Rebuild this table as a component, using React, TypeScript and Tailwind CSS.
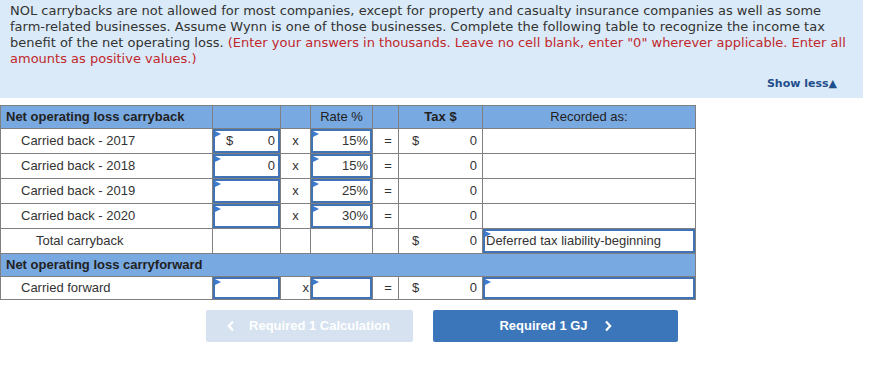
import React from "react";

const cell = "border border-[#808080] p-0 align-middle";
const verdana = { fontFamily: '"DejaVu Sans", Verdana, sans-serif' };

function Flag() {
  return (
    <span className="absolute left-0 top-0 h-0 w-0 border-y-[3px] border-l-[6px] border-y-transparent border-l-[#3b7bd0]" />
  );
}

function Field({
  children,
  h = 24,
  className = "",
}: {
  children?: React.ReactNode;
  h?: number;
  className?: string;
}) {
  return (
    <div
      className={`relative flex w-full items-center border-2 border-[#3f73b5] bg-white ${
        h === 24 ? "h-[24px]" : "h-[22px]"
      } ${className}`}
    >
      <Flag />
      {children}
    </div>
  );
}

function Money({ dollar, value }: { dollar?: boolean; value: string }) {
  return (
    <div className="flex w-full items-center justify-between pl-[11px] pr-[3px]">
      <span>{dollar ? "$" : ""}</span>
      <span>{value}</span>
    </div>
  );
}

function TaxCell({ dollar, value }: { dollar?: boolean; value: string }) {
  return (
    <td className={cell}>
      <div className="flex items-center justify-between pl-[13px] pr-[5px]">
        <span>{dollar ? "$" : ""}</span>
        <span>{value}</span>
      </div>
    </td>
  );
}

const carryback = [
  { label: "Carried back - 2017", dollar: true, amount: "0", rate: "15%", taxDollar: true },
  { label: "Carried back - 2018", dollar: false, amount: "0", rate: "15%", taxDollar: false },
  { label: "Carried back - 2019", dollar: false, amount: "", rate: "25%", taxDollar: false },
  { label: "Carried back - 2020", dollar: false, amount: "", rate: "30%", taxDollar: false },
];

export default function App() {
  return (
    <div className="w-[886px] h-[381px] bg-white text-[#333]">
      <div className="w-[863px] h-[98px] bg-[#daeaf8] pl-[10px] pt-[3px]" style={verdana}>
        <p className="text-[13px] leading-[16px] text-[#333]">
          NOL carrybacks are not allowed for most companies, except for property and casualty insurance companies as well as some
          <br />
          farm-related businesses. Assume Wynn is one of those businesses. Complete the following table to recognize the income tax
          <br />
          benefit of the net operating loss.{" "}
          <span className="text-[#c1272d]">
            (Enter your answers in thousands. Leave no cell blank, enter "0" wherever applicable. Enter all
            <br />
            amounts as positive values.)
          </span>
        </p>
        <div className="mt-[10px] flex justify-end pr-[26px]">
          <span className="text-[11px] font-bold leading-[14px] text-[#1f4f8b]">
            Show less<span className="text-[11px]">▲</span>
          </span>
        </div>
      </div>

      <table
        className="mt-[7px] w-[695px] table-fixed border-collapse text-[13px] text-[#333]"
        style={{ fontFamily: '"Liberation Sans", Arial, sans-serif' }}
      >
        <colgroup>
          <col className="w-[212px]" />
          <col className="w-[68px]" />
          <col className="w-[30px]" />
          <col className="w-[62px]" />
          <col className="w-[26px]" />
          <col className="w-[84px]" />
          <col className="w-[213px]" />
        </colgroup>
        <tbody>
          <tr className="h-[23px] bg-[#78a9e1] text-[#222]">
            <td className={`${cell} pl-[5px] font-bold`}>Net operating loss carryback</td>
            <td className={cell} />
            <td className={cell} />
            <td className={`${cell} text-center`}>Rate %</td>
            <td className={cell} />
            <td className={`${cell} text-center font-bold`}>Tax $</td>
            <td className={`${cell} text-center`}>Recorded as:</td>
          </tr>

          {carryback.map((r) => (
            <tr key={r.label} className="h-[25px]">
              <td className={`${cell} pl-[20px]`}>{r.label}</td>
              <td className={cell}>
                <Field>
                  <Money dollar={r.dollar} value={r.amount} />
                </Field>
              </td>
              <td className={`${cell} text-center`}>x</td>
              <td className={cell}>
                <Field>
                  <span className="w-full pr-[2px] text-right">{r.rate}</span>
                </Field>
              </td>
              <td className={`${cell} pl-[5px] text-center`}>=</td>
              <TaxCell dollar={r.taxDollar} value="0" />
              <td className={cell} />
            </tr>
          ))}

          <tr className="h-[25px]">
            <td className={`${cell} pl-[35px]`}>Total carryback</td>
            <td className={cell} />
            <td className={cell} />
            <td className={cell} />
            <td className={cell} />
            <TaxCell dollar value="0" />
            <td className={cell}>
              <Field>
                <span className="pl-[1px]">Deferred tax liability-beginning</span>
              </Field>
            </td>
          </tr>

          <tr className="h-[23px] bg-[#78a9e1] text-[#222]">
            <td className={`${cell} pl-[5px] font-bold`} colSpan={7}>
              Net operating loss carryforward
            </td>
          </tr>

          <tr className="h-[23px]">
            <td className={`${cell} pl-[20px]`}>Carried forward</td>
            <td className={cell}>
              <Field h={22} />
            </td>
            <td className={`${cell} pr-[1px] text-right`}>x</td>
            <td className={cell}>
              <Field h={22} />
            </td>
            <td className={`${cell} pl-[5px] text-center`}>=</td>
            <TaxCell dollar value="0" />
            <td className={cell}>
              <Field h={22} />
            </td>
          </tr>
        </tbody>
      </table>

      <div
        className="mt-[10px] flex gap-[20px] pl-[206px] text-[13px] font-bold text-white"
        style={{ fontFamily: '"Liberation Sans", Arial, sans-serif' }}
      >
        <button className="flex h-[32px] w-[207px] items-center justify-center gap-[14px] rounded-[2px] bg-[#d6e2f0] pr-[2px]">
          <svg width="8" height="12" viewBox="0 0 8 12">
            <path d="M6 1.5 L1.8 6 L6 10.5" stroke="white" strokeWidth="2.2" fill="none" />
          </svg>
          <span>Required 1 Calculation</span>
        </button>
        <button className="flex h-[32px] w-[245px] items-center justify-center gap-[16px] rounded-[2px] bg-[#3a76b9]">
          <span>Required 1 GJ</span>
          <svg width="8" height="12" viewBox="0 0 8 12">
            <path d="M2 1.5 L6.2 6 L2 10.5" stroke="white" strokeWidth="2.2" fill="none" />
          </svg>
        </button>
      </div>
    </div>
  );
}
